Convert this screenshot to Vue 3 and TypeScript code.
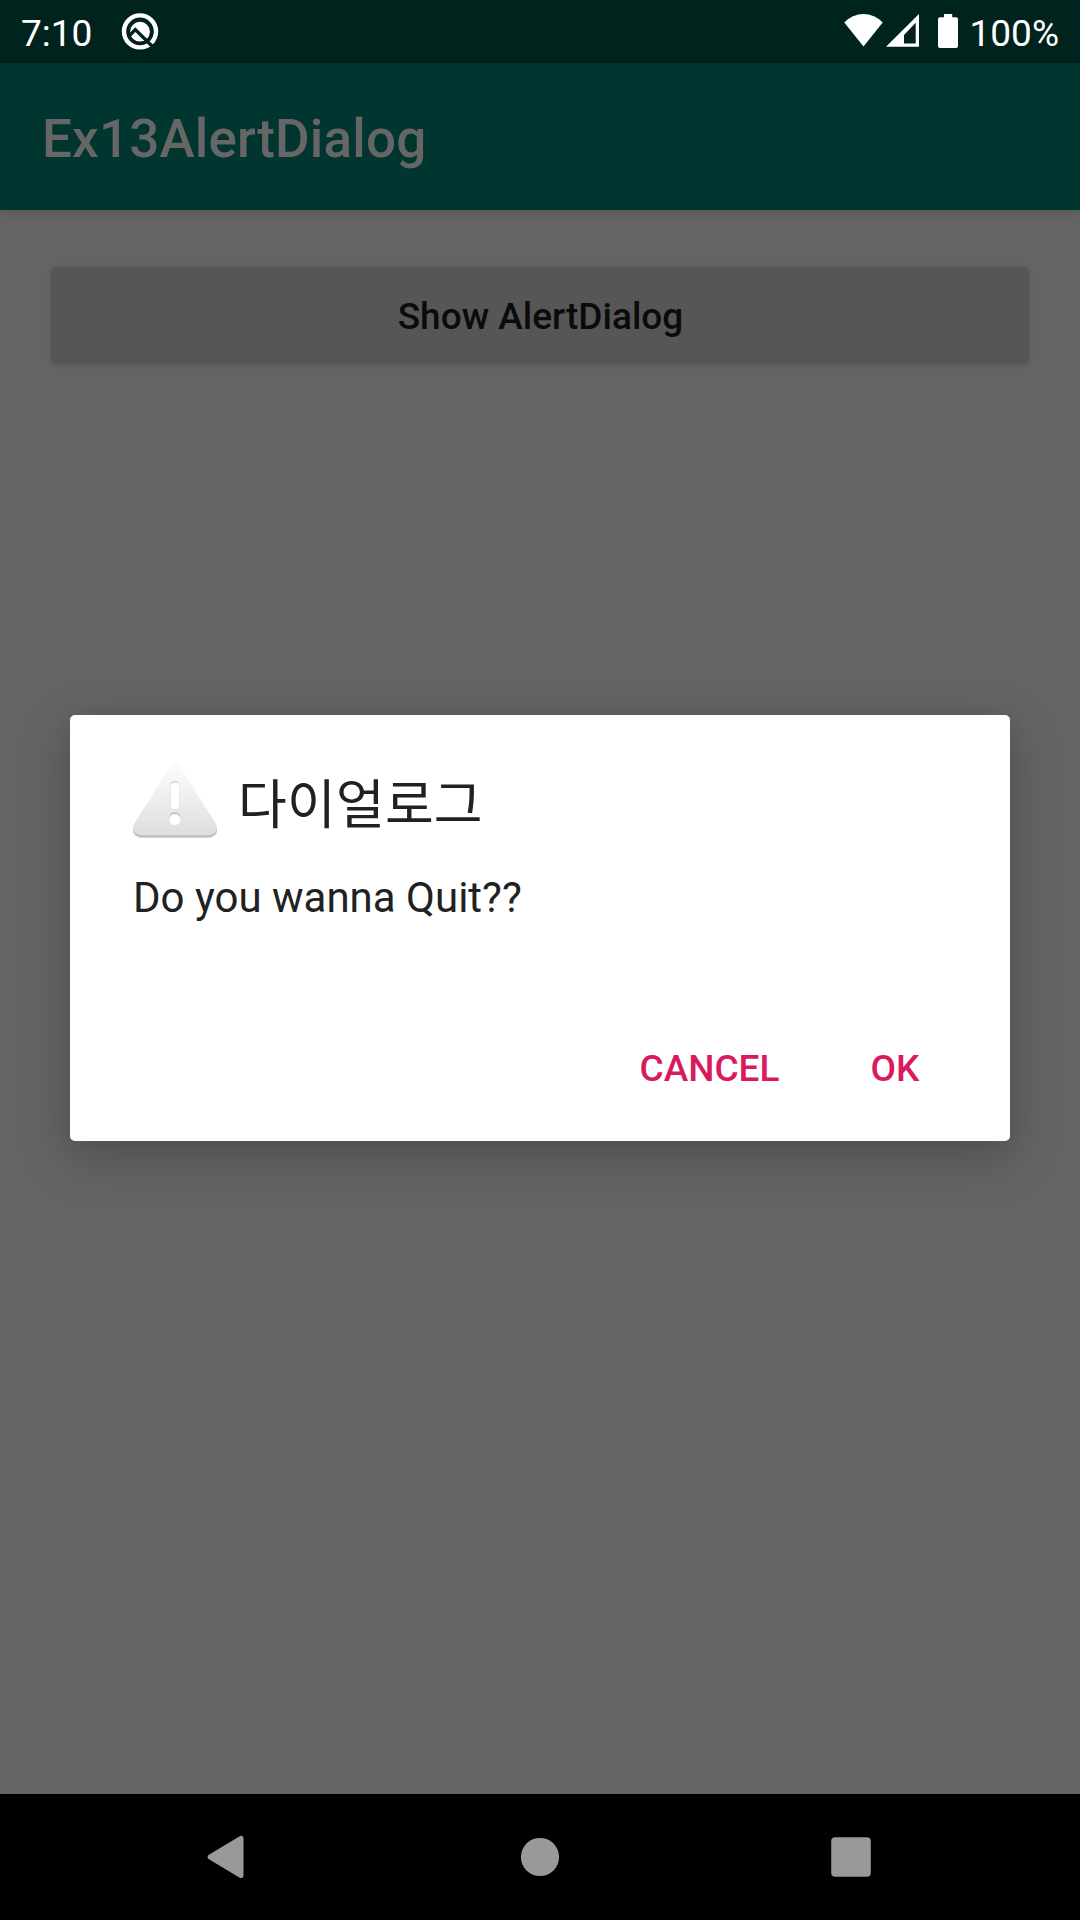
<script setup lang="ts">
import { ref } from 'vue'

const clock = ref('7:10')
const battery = ref('100%')
const appTitle = ref('Ex13AlertDialog')
const dialog = ref({
  title: '다이얼로그',
  message: 'Do you wanna Quit??',
  cancel: 'CANCEL',
  ok: 'OK',
})
</script>

<template>
  <div class="screen">
    <header class="status">
      <span class="clock">{{ clock }}</span>
      <svg class="notice" width="40" height="40" viewBox="0 0 40 40">
        <circle cx="20" cy="19.4" r="16" fill="none" stroke="#fff" stroke-width="4.4" />
        <circle cx="20" cy="19.7" r="9.9" fill="#fff" />
        <path d="M8.5 24.5 L15.3 17.6 L34 36" fill="none" stroke="#00231e" stroke-width="3.4" />
      </svg>
      <span class="grow"></span>
      <svg class="wifi" width="40" height="36" viewBox="0 0 40 36">
        <path d="M.3 10.5 Q8.5 2 19.5 2 T38.7 10.5 L19.5 34.5 Z" fill="#fff" />
      </svg>
      <svg class="signal" width="33" height="36" viewBox="0 0 33 36">
        <path d="M0 34.7 L33 2 V34.7 Z M18 23 V31.6 H29.7 V10.8 Z" fill="#fff" fill-rule="evenodd" />
      </svg>
      <svg class="cell" width="20" height="36" viewBox="0 0 20 36">
        <path d="M6 2 H14.2 V5.2 H18 Q20 5.2 20 7.2 V34 Q20 36 18 36 H2 Q0 36 0 34 V7.2 Q0 5.2 2 5.2 H6 Z" fill="#fff" />
      </svg>
      <span class="percent">{{ battery }}</span>
    </header>

    <div class="toolbar"><h1>{{ appTitle }}</h1></div>

    <main class="content">
      <button class="show" type="button">Show AlertDialog</button>

      <section class="dialog" role="alertdialog">
        <div class="heading">
          <svg width="84" height="84" viewBox="0 0 84 84">
            <defs>
              <linearGradient id="face" x1="0" y1="0" x2="0" y2="1">
                <stop offset="0" stop-color="#fcfcfc" />
                <stop offset=".3" stop-color="#f4f4f4" />
                <stop offset="1" stop-color="#dedede" />
              </linearGradient>
            </defs>
            <g transform="translate(0 2)">
              <path d="M37 8 Q42 1 47 8 L83 67 Q87 77 76 78.5 H8 Q-3 77 1 67 Z" fill="#f3f3f3" />
              <path d="M37 8 Q42 1 47 8 L83 66 Q87 75 76 77.5 H8 Q-3 75 1 66 Z" fill="#bdbdbd" />
              <path d="M37 7 Q42 0 47 7 L83 64 Q87 73 76 75.3 H8 Q-3 73 1 64 Z" fill="url(#face)" />
              <rect x="37.6" y="21" width="8.6" height="27" rx="4.3" fill="#cfcfcf" />
              <rect x="37.8" y="22.5" width="8.2" height="26.5" rx="4.1" fill="#fff" />
              <circle cx="41.8" cy="57.8" r="5.7" fill="#c4c4c4" />
              <circle cx="41.8" cy="59.5" r="5.6" fill="#fff" />
            </g>
          </svg>
          <h2>{{ dialog.title }}</h2>
        </div>
        <p>{{ dialog.message }}</p>
        <div class="actions">
          <button class="cancel" type="button">{{ dialog.cancel }}</button>
          <button class="ok" type="button">{{ dialog.ok }}</button>
        </div>
      </section>
    </main>

    <nav class="navbar">
      <svg width="54" height="54" viewBox="0 0 54 54">
        <path d="M8.2 27 L39 8.5 V45.5 Z" fill="#999" stroke="#999" stroke-width="5" stroke-linejoin="round" />
      </svg>
      <svg width="54" height="54" viewBox="0 0 54 54">
        <circle cx="27" cy="27" r="19.1" fill="#999" />
      </svg>
      <svg width="54" height="54" viewBox="0 0 54 54">
        <rect x="7.2" y="7.2" width="39.6" height="39.6" rx="4" fill="#999" />
      </svg>
    </nav>
  </div>
</template>

<style>
body {
  margin: 0;
  background: #646464;
}
</style>

<style scoped>
.screen {
  width: 1080px;
  height: 1920px;
  display: flex;
  flex-direction: column;
  overflow: hidden;
  background: #646464;
  font-family: Roboto, 'Noto Sans CJK KR', sans-serif;
}
h1, h2, p {
  margin: 0;
}
button {
  border: 0;
  padding: 0;
  font: 500 37px Roboto, sans-serif;
}
.status {
  flex: none;
  height: 63px;
  box-sizing: border-box;
  padding: 0 21px;
  display: flex;
  align-items: flex-start;
  background: #00231e;
  color: #fff;
  font-size: 37px;
  line-height: 67px;
}
.status svg {
  flex: none;
  margin-top: 12px;
}
.clock {
  width: 71px;
}
.notice {
  margin-left: 28px;
}
.grow {
  flex: 1;
}
.signal {
  margin-left: 2px;
}
.cell {
  margin-left: 19px;
}
.percent {
  margin-left: 12px;
}
.toolbar {
  flex: none;
  height: 147px;
  padding-left: 42px;
  background: #003530;
  box-shadow: 0 2px 10px rgba(0, 0, 0, .14);
}
.toolbar h1 {
  color: #666;
  font-size: 53px;
  font-weight: 500;
  letter-spacing: .17px;
  line-height: 153px;
}
.content {
  flex: 1;
  display: flex;
  flex-direction: column;
}
.show {
  flex: none;
  height: 97px;
  margin: 57px 51px 0;
  padding: 2px 0 0 1px;
  border-radius: 5px;
  background: #565656;
  color: #0b0b0b;
  box-shadow: 0 1px 5px rgba(0, 0, 0, .12);
}
.dialog {
  height: 426px;
  margin: 351px 70px 0;
  box-sizing: border-box;
  padding: 43px 31px 0 63px;
  border-radius: 5px;
  background: #fff;
  color: #212121;
  box-shadow: 0 16px 50px rgba(0, 0, 0, .22), 0 0 16px rgba(0, 0, 0, .05);
}
.heading {
  display: flex;
  align-items: center;
  gap: 21px;
  height: 84px;
}
.heading h2 {
  font: 400 53px 'Noto Sans CJK KR', sans-serif;
  letter-spacing: .2px;
  line-height: 84px;
  padding-top: 2px;
}
.dialog p {
  margin-top: 31px;
  font-size: 42px;
  line-height: 50px;
}
.actions {
  display: flex;
  justify-content: flex-end;
  margin-top: 82px;
}
.actions button {
  height: 126px;
  background: none;
  color: #d81b60;
}
.cancel {
  width: 203px;
}
.ok {
  width: 168px;
}
.navbar {
  flex: none;
  height: 126px;
  display: flex;
  align-items: center;
  justify-content: center;
  gap: 257px;
  background: #000;
}
</style>
